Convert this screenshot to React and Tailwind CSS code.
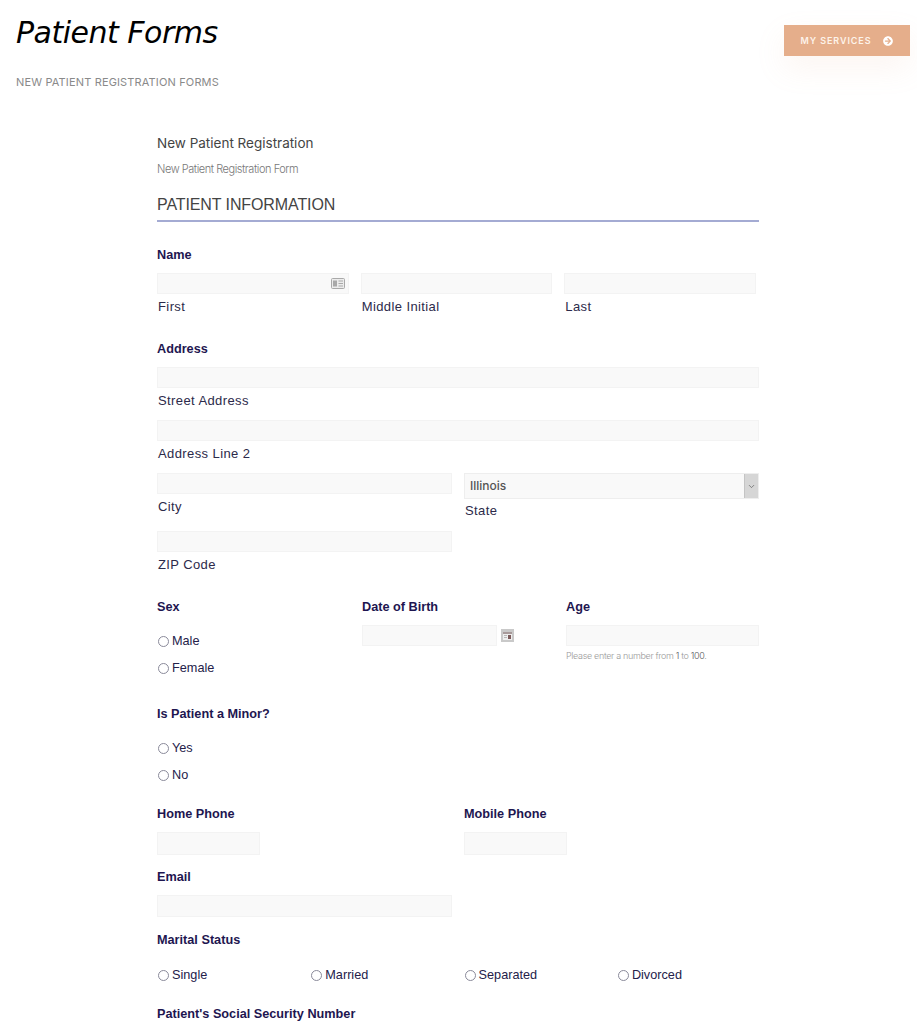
import React from 'react';
import { FaArrowCircleRight } from 'react-icons/fa';
import { LuChevronDown } from 'react-icons/lu';

const inputClass = 'h-[21px] bg-[#f9f9f9] border border-[#f3f3f3]';

function FieldLabel({ children, className = '' }) {
  return <div className={`text-[12.7px] leading-[16px] font-bold text-[#1e1650] font-['Liberation_Sans',sans-serif] ${className}`}>{children}</div>;
}

function SubLabel({ children, className = '' }) {
  return <div className={`pl-px text-[13px] leading-[16px] tracking-[0.4px] text-[#2c2a4a] font-['Liberation_Sans',sans-serif] ${className}`}>{children}</div>;
}

function Radio({ label, className = '' }) {
  return (
    <label className={`flex items-center h-[16px] text-[12.7px] text-[#24214a] font-['Liberation_Sans',sans-serif] ${className}`}>
      <span className="ml-px mr-[3px] -mt-[2px] w-[11px] h-[11px] rounded-full border border-[#8a8a9a] bg-white" />
      {label}
    </label>
  );
}

function CardIcon() {
  return (
    <svg width="14" height="11" viewBox="0 0 14 11">
      <rect x="0.5" y="0.5" width="13" height="10" rx="1" fill="#ececec" stroke="#a9a9a9" />
      <rect x="2" y="2.5" width="4" height="6" fill="#a9a9a9" />
      <rect x="7.5" y="2.5" width="4.5" height="1" fill="#a9a9a9" />
      <rect x="7.5" y="5" width="4.5" height="1" fill="#a9a9a9" />
      <rect x="7.5" y="7.5" width="4.5" height="1" fill="#a9a9a9" />
    </svg>
  );
}

function CalendarIcon() {
  return (
    <svg width="13" height="13" viewBox="0 0 13 13" className="ml-[4px]">
      <rect x="0" y="0" width="13" height="13" fill="#c9c9c9" />
      <rect x="2" y="3" width="9" height="8" fill="#eeeeee" />
      <rect x="2" y="3" width="9" height="2" fill="#a89a9a" />
      <rect x="7" y="6" width="3" height="4" fill="#7d5b5b" />
      <rect x="3" y="6" width="3" height="1" fill="#b9b9b9" />
      <rect x="3" y="8" width="3" height="1" fill="#b9b9b9" />
    </svg>
  );
}

export default function App() {
  return (
    <div className="relative h-[1024px] overflow-hidden bg-white font-['Inter',sans-serif]">

      {/* Header */}
      <div className="flex justify-between items-start pl-[16px] pr-[7px]">
        <div>
          <h1 className="mt-[14px] h-[38px] text-[30px] leading-[38px] italic text-black font-['DejaVu_Sans',cursive] font-extralight tracking-[-0.5px] whitespace-nowrap">Patient Forms</h1>
          <p className="mt-[22px] text-[11px] leading-[16px] tracking-[0.15px] text-[#8a8a8a]">NEW PATIENT REGISTRATION FORMS</p>
        </div>
        <div className="mt-[25px] w-[126px] h-[31px] flex items-center justify-center gap-[12px] bg-[#e5ae8b] shadow-[0_12px_30px_rgba(229,174,139,0.12)]">
          <span className="text-[9px] font-semibold tracking-[0.9px] text-[#fdf3ea]">MY SERVICES</span>
          <FaArrowCircleRight size={10} className="text-white" />
        </div>
      </div>

      {/* Form */}
      <div className="ml-[157px] w-[602px] mt-[43px]">
        <h2 className="text-[13.5px] leading-[20px] text-[#444444]">New Patient Registration</h2>
        <p className="mt-[8px] text-[11px] leading-[16px] tracking-[-0.45px] font-light text-[#777777]">New Patient Registration Form</p>
        <div className="mt-[16px] h-[29px] border-b-2 border-[#a4abd3] text-[16px] leading-[24px] tracking-[-0.1px] text-[#444444] font-['Liberation_Sans',sans-serif]">PATIENT INFORMATION</div>

        {/* Name */}
        <FieldLabel className="mt-[25px]">Name</FieldLabel>
        <div className="mt-[10px] flex gap-[12px] w-[599px]">
          <div className="w-[192px]">
            <div className={`${inputClass} flex items-center justify-end pr-[3px]`}>
              <CardIcon />
            </div>
            <SubLabel className="mt-[5px]">First</SubLabel>
          </div>
          <div className="w-[192px]">
            <div className={inputClass} />
            <SubLabel className="mt-[5px]">Middle Initial</SubLabel>
          </div>
          <div className="w-[192px]">
            <div className={inputClass} />
            <SubLabel className="mt-[5px]">Last</SubLabel>
          </div>
        </div>

        {/* Address */}
        <FieldLabel className="mt-[26px]">Address</FieldLabel>
        <div className={`mt-[10px] ${inputClass}`} />
        <SubLabel className="mt-[5px]">Street Address</SubLabel>
        <div className={`mt-[11px] ${inputClass}`} />
        <SubLabel className="mt-[5px]">Address Line 2</SubLabel>
        <div className="mt-[11px] flex gap-[12px]">
          <div className="w-[295px]">
            <div className={inputClass} />
            <SubLabel className="mt-[5px]">City</SubLabel>
            <div className={`mt-[16px] ${inputClass}`} />
            <SubLabel className="mt-[5px]">ZIP Code</SubLabel>
          </div>
          <div className="w-[295px]">
            <div className="h-[26px] flex items-stretch bg-[#f9f9f9] border border-[#eeeeee]">
              <span className="flex-1 pl-[5px] flex items-center text-[12px] font-medium text-[#555555]">Illinois</span>
              <span className="w-[14px] flex items-center justify-center bg-[#d6d6d6] border-l border-[#c4c4c4]">
                <LuChevronDown size={9} className="text-[#666666]" />
              </span>
            </div>
            <SubLabel className="mt-[4px]">State</SubLabel>
          </div>
        </div>

        {/* Sex, date of birth, age */}
        <div className="mt-[26px] flex">
          <div className="w-[205px]">
            <FieldLabel>Sex</FieldLabel>
            <Radio label="Male" className="mt-[19px]" />
            <Radio label="Female" className="mt-[11px]" />
          </div>
          <div className="w-[204px]">
            <FieldLabel>Date of Birth</FieldLabel>
            <div className="mt-[10px] flex items-center">
              <div className={`w-[135px] ${inputClass}`} />
              <CalendarIcon />
            </div>
          </div>
          <div className="w-[193px]">
            <FieldLabel>Age</FieldLabel>
            <div className={`mt-[10px] ${inputClass}`} />
            <p className="mt-[3px] text-[9px] leading-[14px] tracking-[-0.33px] font-light text-[#999999]">
              Please enter a number from <span className="text-[#555555]">1</span> to <span className="text-[#555555]">100</span>.
            </p>
          </div>
        </div>

        {/* Minor */}
        <FieldLabel className="mt-[29px]">Is Patient a Minor?</FieldLabel>
        <Radio label="Yes" className="mt-[19px]" />
        <Radio label="No" className="mt-[11px]" />

        {/* Phones */}
        <div className="mt-[22px] flex">
          <div className="w-[307px]">
            <FieldLabel>Home Phone</FieldLabel>
            <div className="mt-[10px] w-[103px] h-[23px] bg-[#f9f9f9] border border-[#f3f3f3]" />
          </div>
          <div>
            <FieldLabel>Mobile Phone</FieldLabel>
            <div className="mt-[10px] w-[103px] h-[23px] bg-[#f9f9f9] border border-[#f3f3f3]" />
          </div>
        </div>

        {/* Email */}
        <FieldLabel className="mt-[14px]">Email</FieldLabel>
        <div className="mt-[10px] w-[295px] h-[22px] bg-[#f9f9f9] border border-[#f3f3f3]" />

        {/* Marital status */}
        <FieldLabel className="mt-[15px]">Marital Status</FieldLabel>
        <div className="mt-[20px] grid grid-cols-[153.3px_153.3px_153.3px_1fr]">
          <Radio label="Single" />
          <Radio label="Married" />
          <Radio label="Separated" />
          <Radio label="Divorced" />
        </div>

        {/* SSN */}
        <FieldLabel className="mt-[22px]">Patient's Social Security Number</FieldLabel>
      </div>
    </div>
  );
}
